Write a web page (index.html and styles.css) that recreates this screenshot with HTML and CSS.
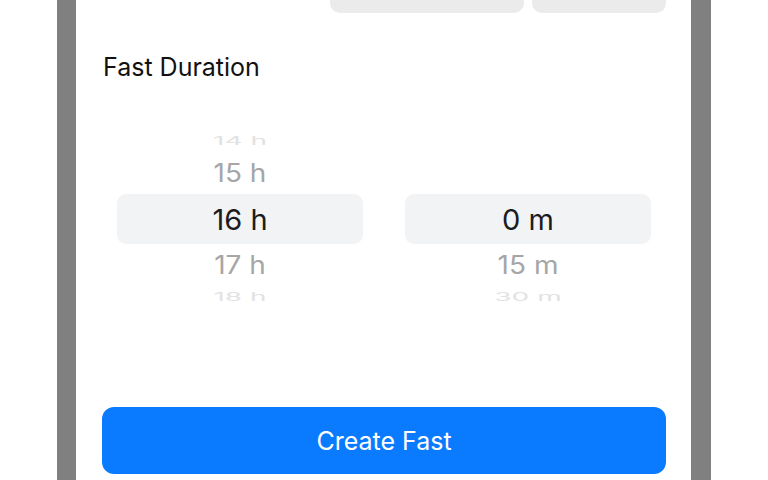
FILE: index.html
```html
<!DOCTYPE html>
<html>
<head>
<meta charset="UTF-8">
<title>Create Fast</title>
<link rel="stylesheet" href="styles.css">
</head>
<body>
<div class="frame">
  <div class="sheet">
    <div class="fields">
      <div class="field wide"></div>
      <div class="field narrow"></div>
    </div>

    <h2 class="label">Fast Duration</h2>

    <div class="picker">
      <div class="wheel">
        <div class="row faint">14 h</div>
        <div class="row near">15 h</div>
        <div class="row current">16 h</div>
        <div class="row near">17 h</div>
        <div class="row faint">18 h</div>
      </div>
      <div class="wheel">
        <div class="row faint"></div>
        <div class="row near"></div>
        <div class="row current">0 m</div>
        <div class="row near">15 m</div>
        <div class="row faint">30 m</div>
      </div>
    </div>

    <button class="create">Create Fast</button>
  </div>
</div>
</body>
</html>
```

FILE: styles.css
```css
html, body {margin:0; padding:0; background:#fff;}
body {font-family:Inter, "Liberation Sans", sans-serif; color:#111;}

.frame {margin-left:57px; width:615px; height:480px; border-left:19px solid #808080; border-right:20px solid #808080; overflow:hidden;}
.sheet {padding:0 25px 0 26px; background:#fff;}

.fields {display:flex; justify-content:flex-end; gap:8px;}
.field {height:13px; background:#ebebeb; border-radius:0 0 10px 10px;}
.field.wide {width:194px;}
.field.narrow {width:134px;}

.label {margin:39px 0 0 1px; font-size:25px; font-weight:400; line-height:30px; color:#111;}

.picker {display:flex; gap:42px; padding:0 15px; margin-top:48px;}
.wheel {flex:1; display:flex; flex-direction:column;}
.row {text-align:center; font-size:28px; white-space:nowrap;}
.row.current {height:50px; line-height:52px; background:#f2f3f5; border-radius:9px; color:#1c1c1e; font-size:29px;}
.row.near {height:42px; line-height:42px; color:#a6a6a6; transform:scaleY(0.92);}
.row.faint {height:22px; line-height:22px; color:#e2e2e2; transform:scaleY(0.42);}

.create {display:block; width:100%; height:67px; margin-top:99px; border:0; border-radius:12px; background:#0a7bff; color:#fff; font-family:Inter, "Liberation Sans", sans-serif; font-size:25px; font-weight:400; padding:0;}
```
